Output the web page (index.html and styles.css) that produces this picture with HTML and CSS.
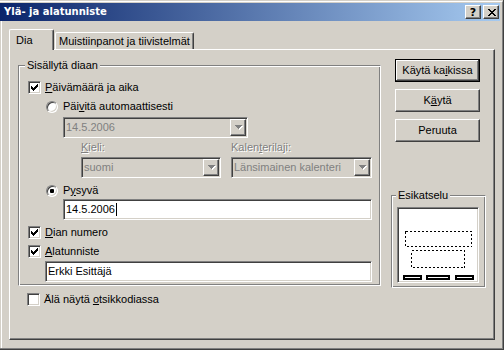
FILE: index.html
```html
<!DOCTYPE html>
<html lang="fi">
<head>
    <meta charset="UTF-8">
    <title>Ylä- ja alatunniste</title>
    <link rel="stylesheet" href="styles.css">
</head>
<body>
    <div class="window">
        <div class="frame">
            <div class="titlebar">
                <span class="title">Ylä- ja alatunniste</span>
                <span class="cap-btn help">?</span>
                <span class="cap-btn close">
                    <svg width="8" height="7" viewBox="0 0 8 7"><path d="M0 0h2v1h-2z M6 0h2v1h-2z M1 1h2v1h-2z M5 1h2v1h-2z M2 2h4v1h-4z M3 3h2v1h-2z M2 4h4v1h-4z M1 5h2v1h-2z M5 5h2v1h-2z M0 6h2v1h-2z M6 6h2v1h-2z"/></svg>
                </span>
            </div>

            <div class="client">
                <div class="tabs">
                    <div class="tab tab-active">Dia</div>
                    <div class="tab tab-notes">Muistiinpanot ja tiivistelmät</div>
                </div>

                <div class="panel">
                    <!-- vasen sarake -->
                    <div class="col-main">
                        <div class="group include">
                            <span class="legend">Sisällytä diaan</span>

                            <div class="opt opt-date">
                                <span class="box"><svg width="11" height="11" viewBox="0 0 11 11"><path d="M8 2h1v1h-1z M7 3h2v1h-2z M2 4h1v1h-1z M6 4h3v1h-3z M2 5h2v1h-2z M5 5h3v1h-3z M2 6h5v1h-5z M3 7h3v1h-3z M4 8h1v1h-1z"/></svg></span>
                                <span><u>P</u>äivämäärä ja aika</span>
                            </div>

                            <div class="opt opt-auto">
                                <span class="radio"></span>
                                <span>Päi<u>v</u>itä automaattisesti</span>
                            </div>

                            <div class="combo combo-date">
                                <span class="combo-text">14.5.2006</span>
                                <span class="drop"><svg width="8" height="5" viewBox="0 0 8 5"><path fill="#fff" d="M1 1h7v1h-7z M2 2h5v1h-5z M3 3h3v1h-3z M4 4h1v1h-1z"/><path fill="#808080" d="M0 0h7v1h-7z M1 1h5v1h-5z M2 2h3v1h-3z M3 3h1v1h-1z"/></svg></span>
                            </div>

                            <div class="lang-grid">
                                <span class="dim"><u>K</u>ieli:</span>
                                <span class="dim">Kalen<u>t</u>erilaji:</span>
                                <div class="combo">
                                    <span class="combo-text">suomi</span>
                                    <span class="drop"><svg width="8" height="5" viewBox="0 0 8 5"><path fill="#fff" d="M1 1h7v1h-7z M2 2h5v1h-5z M3 3h3v1h-3z M4 4h1v1h-1z"/><path fill="#808080" d="M0 0h7v1h-7z M1 1h5v1h-5z M2 2h3v1h-3z M3 3h1v1h-1z"/></svg></span>
                                </div>
                                <div class="combo">
                                    <span class="combo-text">Länsimainen kalenteri</span>
                                    <span class="drop"><svg width="8" height="5" viewBox="0 0 8 5"><path fill="#fff" d="M1 1h7v1h-7z M2 2h5v1h-5z M3 3h3v1h-3z M4 4h1v1h-1z"/><path fill="#808080" d="M0 0h7v1h-7z M1 1h5v1h-5z M2 2h3v1h-3z M3 3h1v1h-1z"/></svg></span>
                                </div>
                            </div>

                            <div class="opt opt-fixed">
                                <span class="radio radio-on"></span>
                                <span>P<u>y</u>syvä</span>
                            </div>

                            <div class="field field-date">14.5.2006<span class="caret"></span></div>

                            <div class="opt opt-number">
                                <span class="box"><svg width="11" height="11" viewBox="0 0 11 11"><path d="M8 2h1v1h-1z M7 3h2v1h-2z M2 4h1v1h-1z M6 4h3v1h-3z M2 5h2v1h-2z M5 5h3v1h-3z M2 6h5v1h-5z M3 7h3v1h-3z M4 8h1v1h-1z"/></svg></span>
                                <span><u>D</u>ian numero</span>
                            </div>

                            <div class="opt opt-footer">
                                <span class="box"><svg width="11" height="11" viewBox="0 0 11 11"><path d="M8 2h1v1h-1z M7 3h2v1h-2z M2 4h1v1h-1z M6 4h3v1h-3z M2 5h2v1h-2z M5 5h3v1h-3z M2 6h5v1h-5z M3 7h3v1h-3z M4 8h1v1h-1z"/></svg></span>
                                <span><u>A</u>latunniste</span>
                            </div>

                            <div class="field field-footer">Erkki Esittäjä</div>
                        </div>

                        <div class="opt opt-skip">
                            <span class="box"></span>
                            <span>Älä näytä <u>o</u>tsikkodiassa</span>
                        </div>
                    </div>

                    <!-- oikea sarake -->
                    <div class="col-side">
                        <button class="btn btn-default">Käytä ka<u>i</u>kissa</button>
                        <button class="btn">K<u>ä</u>ytä</button>
                        <button class="btn">Peruuta</button>

                        <div class="group preview">
                            <span class="legend">Esikatselu</span>
                            <div class="slide">
                                <svg width="78" height="72" viewBox="0 0 78 72">
                                    <g fill="none" stroke="#000" stroke-dasharray="2 2" shape-rendering="crispEdges">
                                        <rect x="6.5" y="22.5" width="66" height="15"/>
                                        <rect x="12.5" y="41.5" width="53" height="17"/>
                                    </g>
                                    <g fill="#000">
                                        <rect x="4" y="66" width="19" height="5"/>
                                        <rect x="27" y="66" width="24" height="5"/>
                                        <rect x="56" y="66" width="19" height="5"/>
                                    </g>
                                    <g fill="#fff">
                                        <rect x="6" y="68" width="15" height="1"/>
                                        <rect x="29" y="68" width="20" height="1"/>
                                        <rect x="58" y="68" width="15" height="1"/>
                                    </g>
                                </svg>
                            </div>
                        </div>
                    </div>
                </div>
            </div>
        </div>
    </div>
</body>
</html>
```

FILE: styles.css
```css
* {
    box-sizing: border-box;
}

body {
    margin: 0;
    background: #d4d0c8;
    color: #000;
    font-family: "Liberation Sans", Arial, sans-serif;
    font-size: 11px;
    line-height: 13px;
}

/* ikkunan kehys */
.window {
    width: 504px;
    height: 350px;
    padding-top: 1px;
    border-right: 1px solid #404040;
    border-bottom: 1px solid #404040;
}

.frame {
    height: 100%;
    display: flex;
    flex-direction: column;
    padding: 1px 2px 0 0;
    border-top: 1px solid #fff;
    border-right: 1px solid #808080;
    border-bottom: 1px solid #808080;
}

/* otsikkopalkki */
.titlebar {
    height: 18px;
    display: flex;
    align-items: flex-start;
    padding: 0 1px 0 4px;
    background: linear-gradient(to right, #0a246a, #a6caf0);
}

.title {
    color: #fff;
    font-family: "DejaVu Sans", sans-serif;
    font-weight: bold;
    font-size: 10px;
    line-height: 18px;
}

.cap-btn {
    width: 16px;
    height: 14px;
    margin-top: 2px;
    display: flex;
    align-items: center;
    justify-content: center;
    background: #d4d0c8;
    border: 1px solid;
    border-color: #fff #404040 #404040 #fff;
    box-shadow: inset -1px -1px #808080;
}

.help {
    margin-left: auto;
    font-family: "DejaVu Sans", sans-serif;
    font-weight: bold;
    font-size: 11px;
    line-height: 11px;
}

.close {
    margin-left: 2px;
}

.close svg {
    display: block;
    margin: 0 0 0 1px;
}

/* sisältöalue */
.client {
    flex: 1;
    margin-left: 1px;
    padding: 8px 0 0 7px;
    border-left: 1px solid #fff;
}

/* välilehdet */
.tabs {
    height: 20px;
    display: flex;
    align-items: flex-end;
}

.tab {
    height: 17px;
    padding: 2px 0 0 3px;
    border: 1px solid;
    border-bottom: none;
    border-color: #fff #404040 #404040 #fff;
    border-radius: 2px 2px 0 0;
    box-shadow: inset -1px 0 #808080;
    white-space: nowrap;
}

.tab-active {
    position: relative;
    z-index: 1;
    width: 45px;
    height: 21px;
    margin-bottom: -1px;
    padding: 4px 0 0 6px;
    background: #d4d0c8;
}

.tab-notes {
    width: 139px;
    margin-left: 1px;
}

.panel {
    width: 486px;
    height: 291px;
    display: flex;
    padding-left: 8px;
    border: 1px solid;
    border-color: #fff #404040 #404040 #fff;
    box-shadow: inset -1px -1px #808080;
}

.col-main {
    width: 363px;
    padding-top: 15px;
}

.col-side {
    width: 95px;
    margin-left: 10px;
    padding-top: 9px;
    display: flex;
    flex-direction: column;
    align-items: flex-start;
}

/* ryhmäkehykset */
.group {
    display: flex;
    flex-direction: column;
    align-items: flex-start;
    border: 1px solid;
    border-color: #808080 #fff #fff #808080;
    box-shadow: inset 1px 1px #fff, inset -1px -1px #808080;
}

.legend {
    margin: -7px 0 0 -3px;
    padding: 0 2px;
    background: #d4d0c8;
    white-space: nowrap;
}

.include {
    width: 363px;
    height: 221px;
    padding-left: 9px;
}

/* valintaruudut ja valintanapit */
.opt {
    height: 13px;
    display: flex;
    align-items: center;
    white-space: nowrap;
}

.box {
    width: 13px;
    height: 13px;
    margin-right: 4px;
    flex: none;
    background: #fff;
    border: 1px solid;
    border-color: #808080 #fff #fff #808080;
    box-shadow: inset 1px 1px #404040, inset -1px -1px #d4d0c8;
}

.box svg {
    display: block;
}

.radio {
    width: 12px;
    height: 12px;
    margin-right: 5px;
    flex: none;
    display: flex;
    align-items: center;
    justify-content: center;
    background: #fff;
    border: 1px solid;
    border-color: #808080 #fff #fff #808080;
    border-radius: 50%;
    box-shadow: inset 1px 1px #404040, inset -1px -1px #d4d0c8;
}

.radio-on::after {
    content: "";
    width: 4px;
    height: 4px;
    border-radius: 1px;
    background: #000;
}

.opt-date { margin-top: 9px; }
.opt-auto { margin: 6px 0 0 18px; }
.opt-fixed { margin: 6px 0 0 18px; }
.opt-number { margin-top: 6px; }
.opt-footer { margin-top: 6px; }
.opt-skip { margin: 7px 0 0 9px; }

/* yhdistelmäruudut ja tekstikentät */
.combo,
.field {
    height: 21px;
    display: flex;
    align-items: center;
    border: 1px solid;
    border-color: #808080 #fff #fff #808080;
    box-shadow: inset 1px 1px #404040, inset -1px -1px #d4d0c8;
    white-space: nowrap;
}

.combo {
    padding: 1px;
    color: #808080;
    background: #d4d0c8;
}

.combo-text {
    flex: 1;
    padding-left: 1px;
    overflow: hidden;
}

.drop {
    width: 16px;
    height: 17px;
    flex: none;
    display: flex;
    align-items: center;
    justify-content: center;
    border: 1px solid;
    border-color: #fff #404040 #404040 #fff;
    box-shadow: inset -1px -1px #808080;
}

.drop svg {
    display: block;
    margin-left: 1px;
}

.combo-date {
    width: 185px;
    margin: 4px 0 0 35px;
}

.lang-grid {
    display: grid;
    grid-template-columns: 140px 141px;
    column-gap: 10px;
    row-gap: 3px;
    margin: 3px 0 0 53px;
}

.dim {
    color: #808080;
    text-shadow: 1px 1px 0 #fff;
}

.field {
    padding: 0 2px;
    background: #fff;
}

.caret {
    width: 1px;
    height: 13px;
    margin-left: 1px;
    background: #000;
}

.field-date {
    width: 309px;
    margin: 2px 0 0 35px;
}

.field-footer {
    width: 327px;
    margin: 3px 0 0 17px;
}

/* painikkeet */
.btn {
    width: 85px;
    height: 23px;
    margin-left: 4px;
    padding: 0;
    font: inherit;
    color: #000;
    background: #d4d0c8;
    border: 1px solid;
    border-color: #fff #404040 #404040 #fff;
    box-shadow: inset -1px -1px #808080;
}

.btn + .btn {
    margin-top: 7px;
}

.btn-default {
    border-color: #000;
    box-shadow: inset -1px -1px #404040, inset 1px 1px #fff, inset -2px -2px #808080;
}

/* esikatselu */
.preview {
    width: 95px;
    height: 93px;
    margin-top: 53px;
    padding-left: 5px;
}

.preview .legend {
    margin-left: -1px;
}

.slide {
    width: 82px;
    height: 76px;
    margin-top: 5px;
    padding: 1px;
    background: #fff;
    border: 1px solid;
    border-color: #808080 #fff #fff #808080;
    box-shadow: inset 1px 1px #404040, inset -1px -1px #d4d0c8;
}

.slide svg {
    display: block;
}
```
